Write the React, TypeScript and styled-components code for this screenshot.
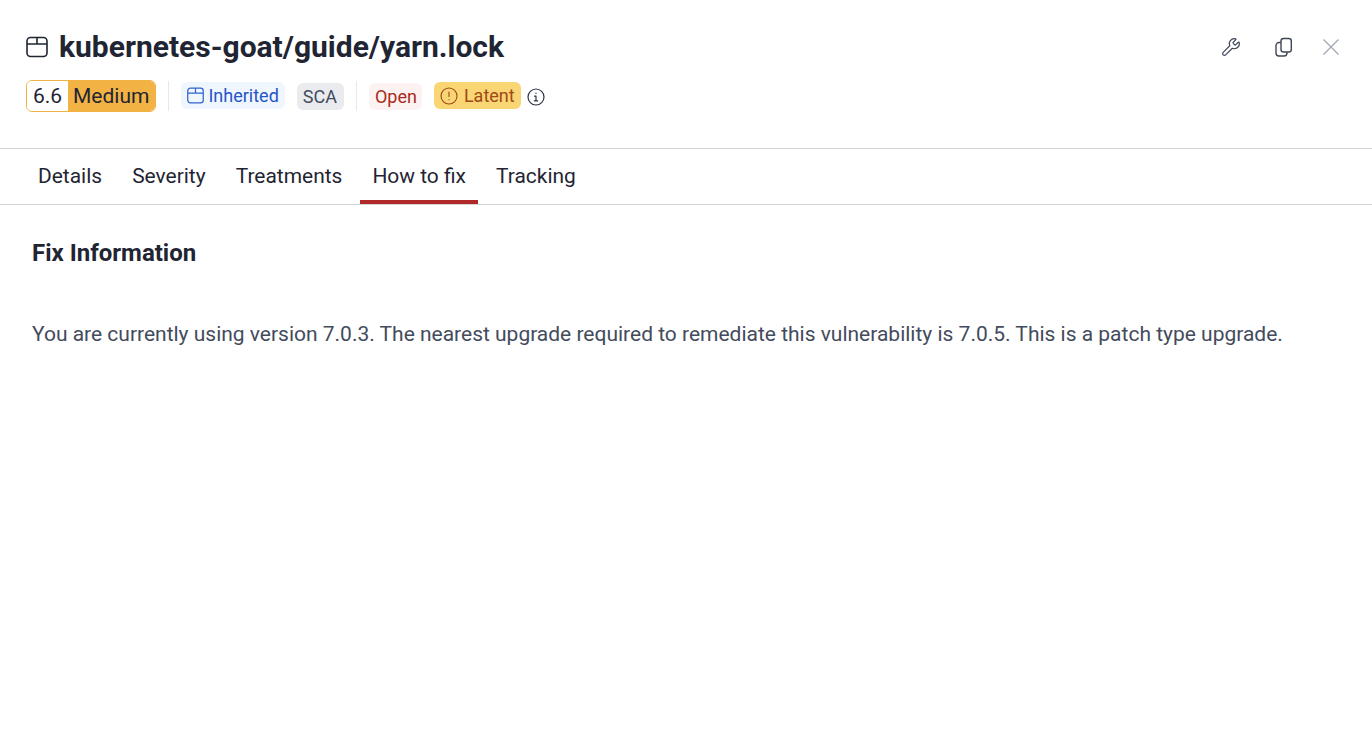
import React from "react";
import styled, { createGlobalStyle } from "styled-components";
import { Wrench } from "lucide-react";

const GlobalStyle = createGlobalStyle`
  html, body {
    margin: 0;
    padding: 0;
    background: #fff;
    font-family: Roboto, "Liberation Sans", sans-serif;
  }
`;

const Page = styled.div`
  width: 1372px;
  height: 756px;
  display: flex;
  flex-direction: column;
  overflow: hidden;
`;

const Header = styled.header`
  height: 148px;
  box-sizing: border-box;
  padding: 26px 32px 0 26px;
  display: flex;
  justify-content: space-between;
  align-items: flex-start;
`;

const HeaderMain = styled.div`
  display: flex;
  flex-direction: column;
  gap: 13px;
`;

const TitleRow = styled.div`
  display: flex;
  align-items: center;
  gap: 11px;
  height: 41px;
`;

const Title = styled.h1`
  margin: 0;
  font-size: 30px;
  line-height: 41px;
  font-weight: 700;
  color: #1f2533;
`;

const BadgeRow = styled.div`
  display: flex;
  align-items: center;
  height: 32px;
`;

const Score = styled.div`
  display: flex;
  height: 32px;
  box-sizing: border-box;
  border: 1px solid #f3b344;
  border-radius: 6px;
  overflow: hidden;
  font-size: 21px;
  color: #1f2533;
  line-height: 30px;
`;

const ScoreValue = styled.span`
  width: 41px;
  padding-left: 6px;
  box-sizing: border-box;
  background: #fff;
`;

const ScoreLabel = styled.span`
  background: #f3b344;
  padding: 0 6px 0 5px;
`;

const Divider = styled.span`
  width: 1px;
  height: 30px;
  background: #e6e8ec;
  margin: 0 12px;
`;

const Pill = styled.span<{ $bg: string; $fg: string; $gap?: number; $raised?: boolean; $right?: number }>`
  display: inline-flex;
  align-items: center;
  gap: ${(p) => p.$gap ?? 0}px;
  height: 27px;
  padding: 0 ${(p) => p.$right ?? 6}px 0 6px;
  margin-bottom: ${(p) => (p.$raised ? 1 : 0)}px;
  border-radius: 6px;
  font-size: 18px;
  background: ${(p) => p.$bg};
  color: ${(p) => p.$fg};
`;

const SpacedPill = styled(Pill)`
  margin-left: 12px;
`;

const InfoButton = styled.span`
  display: inline-flex;
  margin: 1px 0 0 6px;
  color: #2b3242;
`;

const Actions = styled.div`
  display: flex;
  align-items: center;
  gap: 30px;
  height: 41px;
`;

const ActionIcon = styled.span<{ $color?: string }>`
  display: inline-flex;
  color: ${(p) => p.$color ?? "#3f4656"};
`;

const Tabs = styled.nav`
  height: 57px;
  box-sizing: border-box;
  border-top: 1px solid #d3d6dc;
  border-bottom: 1px solid #d3d6dc;
  padding-left: 26px;
  display: flex;
  gap: 6px;
`;

const Tab = styled.div<{ $active?: boolean }>`
  padding: 0 12px;
  height: 55px;
  box-sizing: border-box;
  line-height: 54px;
  font-size: 20.96px;
  color: #1f2533;
  border-bottom: 4px solid ${(p) => (p.$active ? "#b02a2a" : "transparent")};
`;

const Content = styled.main`
  padding: 33px 32px 0;
`;

const SectionTitle = styled.h2`
  margin: 0 0 51px;
  font-size: 24px;
  line-height: 30px;
  font-weight: 700;
  color: #1f2533;
`;

const Body = styled.p`
  margin: 0;
  font-size: 20.99px;
  line-height: 30px;
  color: #434b5c;
`;

function BoxIcon({ size, color }: { size: number; color: string }) {
  return (
    <svg width={size} height={size} viewBox="0 0 22 22" fill="none" stroke={color} strokeWidth={1.6} strokeLinejoin="round">
      <rect x="1" y="1.5" width="20" height="19" rx="3.5" />
      <path d="M1 8h20M11 1.5V8" />
    </svg>
  );
}

export default function App() {
  return (
    <Page>
      <GlobalStyle />
      <Header>
        <HeaderMain>
          <TitleRow>
            <BoxIcon size={22} color="#1f2533" />
            <Title>kubernetes-goat/guide/yarn.lock</Title>
          </TitleRow>
          <BadgeRow>
            <Score>
              <ScoreValue>6.6</ScoreValue>
              <ScoreLabel>Medium</ScoreLabel>
            </Score>
            <Divider />
            <Pill $bg="#f0f6fe" $fg="#2555c8" $gap={4} $raised>
              <BoxIcon size={17} color="#2f62d0" />
              Inherited
            </Pill>
            <SpacedPill $bg="#e9ebef" $fg="#434b5c" $right={7}>SCA</SpacedPill>
            <Divider />
            <Pill $bg="#fdf2f2" $fg="#a92b20" $right={5}>Open</Pill>
            <SpacedPill $bg="#f9d673" $fg="#a1481a" $gap={6} $raised>
              <svg width="18" height="18" viewBox="0 0 18 18" fill="none" stroke="currentColor" strokeWidth={1.1} strokeLinecap="round">
                <circle cx="9" cy="9" r="8" />
                <path d="M9 5v4.5M9 12.6v.1" />
              </svg>
              Latent
            </SpacedPill>
            <InfoButton>
              <svg width="18" height="18" viewBox="0 0 18 18" fill="none" stroke="currentColor" strokeWidth={1.2} strokeLinecap="round" strokeLinejoin="round">
                <circle cx="9" cy="9" r="8" />
                <path d="M7.5 8.2H9v4.6M7.3 12.8h3.4M9 5.2v.2" />
              </svg>
            </InfoButton>
          </BadgeRow>
        </HeaderMain>
        <Actions>
          <ActionIcon>
            <Wrench size={20} strokeWidth={1.4} />
          </ActionIcon>
          <ActionIcon>
            <svg width="21" height="22" viewBox="0 0 21 22" fill="none" stroke="currentColor" strokeWidth={1.4} strokeLinejoin="round">
              <rect x="10" y="2.5" width="10.3" height="13.5" rx="2.6" />
              <path d="M10 6.5H8a3 3 0 0 0-3 3v7.5a3 3 0 0 0 3 3h5a3 3 0 0 0 3-3v-1" />
            </svg>
          </ActionIcon>
          <ActionIcon $color="#a3a9b5">
            <svg width="18" height="18" viewBox="0 0 18 18" fill="none" stroke="currentColor" strokeWidth={1.4}>
              <path d="M1.5 1.5l15 15M16.5 1.5l-15 15" />
            </svg>
          </ActionIcon>
        </Actions>
      </Header>
      <Tabs>
        <Tab>Details</Tab>
        <Tab>Severity</Tab>
        <Tab>Treatments</Tab>
        <Tab $active>How to fix</Tab>
        <Tab>Tracking</Tab>
      </Tabs>
      <Content>
        <SectionTitle>Fix Information</SectionTitle>
        <Body>
          You are currently using version 7.0.3. The nearest upgrade required to remediate this vulnerability is 7.0.5. This is a patch type upgrade.
        </Body>
      </Content>
    </Page>
  );
}
